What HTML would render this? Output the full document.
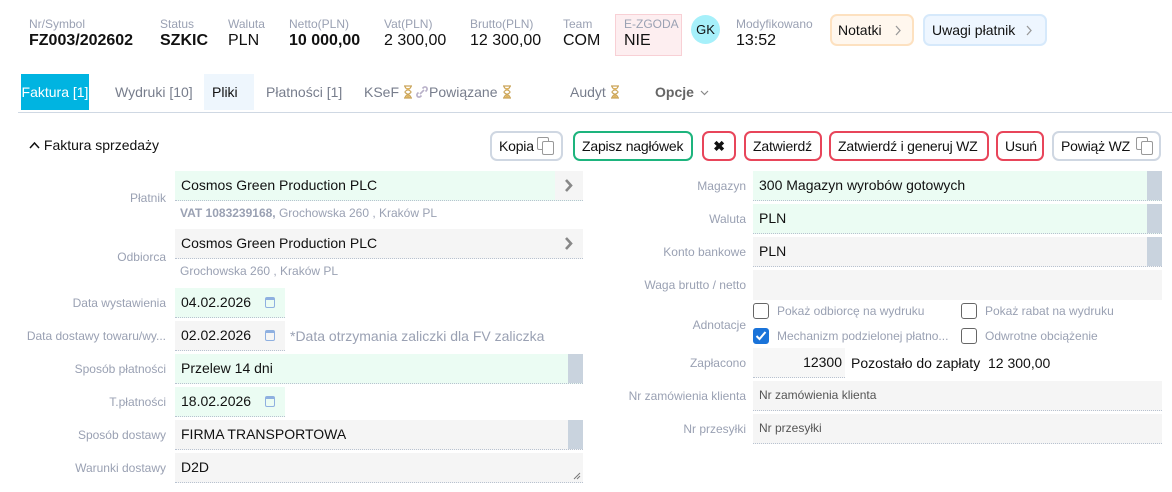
<!DOCTYPE html>
<html><head><meta charset="utf-8"><style>
*{box-sizing:border-box;margin:0;padding:0}
body{width:1172px;height:492px;overflow:hidden;background:#fff;font-family:"Liberation Sans",Arial,sans-serif;color:#111;position:relative}
.a{position:absolute;white-space:nowrap}
.hl{font-size:12px;color:#9aa1b3}
.hv{font-size:16px;color:#111}
.tab{position:absolute;top:74px;height:36px;line-height:36px;font-size:14px;color:#777d8c;padding:0 8px;white-space:nowrap}
.btn{position:absolute;top:131px;height:30px;border:2px solid #e8455a;border-radius:7px;font-size:14px;line-height:26px;padding:0 7px;background:#fff;color:#111;white-space:nowrap;letter-spacing:-0.2px}
.lbl{position:absolute;font-size:12px;color:#9aa1b3;text-align:right;white-space:nowrap}
.f{position:absolute;height:30px;background:#f5f5f5;border-bottom:1px dotted #b8c2d0;font-size:14px;line-height:29px;padding-left:6px;white-space:nowrap}
.g{background:#ebfcf3}
.bar{position:absolute;right:0;top:0;width:15px;height:29px;background:#c9d3de}
.cal{display:inline-block;width:10px;height:11px;border:1.5px solid #8fb0e0;border-top-width:3px;border-radius:2px;margin-left:14px;vertical-align:-1px}
.cb{position:absolute;width:16px;height:16px;border:1.5px solid #666;border-radius:3px;background:#fff}
.ct{position:absolute;font-size:12px;color:#9aa1b3;white-space:nowrap}
.copy{position:absolute;top:4px;width:20px;height:20px}
.copy i{position:absolute;border:1.5px solid #999;border-radius:2px;background:#fff}
.hg{display:inline-block;vertical-align:-2px;margin-left:4px}
.chev{position:absolute;right:0;top:0;width:28px;height:29px}
</style></head><body>
<!-- header -->
<div class="a hl" style="left:29px;top:17px">Nr/Symbol</div><div class="a hv" style="left:29px;top:32px;font-weight:bold">FZ003/202602</div>
<div class="a hl" style="left:160px;top:17px">Status</div><div class="a hv" style="left:160px;top:32px;font-weight:bold">SZKIC</div>
<div class="a hl" style="left:228px;top:17px">Waluta</div><div class="a hv" style="left:228px;top:32px">PLN</div>
<div class="a hl" style="left:289px;top:17px">Netto(PLN)</div><div class="a hv" style="left:289px;top:32px;font-weight:bold">10 000,00</div>
<div class="a hl" style="left:384px;top:17px">Vat(PLN)</div><div class="a hv" style="left:384px;top:32px">2 300,00</div>
<div class="a hl" style="left:470px;top:17px">Brutto(PLN)</div><div class="a hv" style="left:470px;top:32px">12 300,00</div>
<div class="a hl" style="left:563px;top:17px">Team</div><div class="a hv" style="left:563px;top:32px">COM</div>
<div class="a" style="left:615px;top:14px;width:67px;height:42px;background:#fdeef0;border:1px solid #f8d0d5"></div>
<div class="a hl" style="left:624px;top:17px">E-ZGODA</div><div class="a hv" style="left:624px;top:32px">NIE</div>
<div class="a" style="left:691px;top:15px;width:29px;height:29px;border-radius:50%;background:#a6f0fa;font-size:13px;text-align:center;line-height:29px">GK</div>
<div class="a hl" style="left:736px;top:17px">Modyfikowano</div><div class="a hv" style="left:736px;top:32px">13:52</div>
<div class="a" style="left:830px;top:14px;width:84px;height:32px;background:#fff7ee;border:2px solid #fde1c0;border-radius:7px;font-size:14px;line-height:28px;padding-left:6px">Notatki<svg style="position:absolute;left:62px;top:9px" width="8" height="11"><path d="M2 1l4 4.5-4 4.5" stroke="#999" stroke-width="1.3" fill="none"/></svg></div>
<div class="a" style="left:923px;top:14px;width:124px;height:32px;background:#eef6ff;border:2px solid #d6e9fb;border-radius:7px;font-size:14px;line-height:28px;padding-left:7px">Uwagi płatnik<svg style="position:absolute;left:100px;top:9px" width="8" height="11"><path d="M2 1l4 4.5-4 4.5" stroke="#999" stroke-width="1.3" fill="none"/></svg></div>
<!-- tabs -->
<svg width="0" height="0" style="position:absolute"><defs><g id="hg"><path d="M1 1h8M1 13h8M2 1c0 4 6 4 6 6s-6 2-6 6M8 1c0 4-6 4-6 6s6 2 6 6" stroke="#c9a45a" stroke-width="1.2" fill="none"/><path d="M3 3h4l-2 3zM2.5 12.5l2.5-3 2.5 3z" fill="#e0b560"/></g></defs></svg>
<div class="tab" style="left:21px;width:68px;padding:0;text-align:center;background:#00b4e1;color:#fff">Faktura [1]</div>
<div class="tab" style="left:107px">Wydruki [10]</div>
<div class="tab" style="left:204px;width:50px;background:#eef6fd;color:#111">Pliki</div>
<div class="tab" style="left:258px">Płatności [1]</div>
<div class="tab" style="left:356px">KSeF<svg class="hg" width="10" height="14"><use href="#hg"/></svg></div>
<div class="tab" style="left:407px"><svg width="14" height="12" style="vertical-align:-1px"><path d="M5 8l4-4M3.5 6.5l-1 1a2 2 0 003 3l1-1M7.5 2.5l1-1a2 2 0 013 3l-1 1" stroke="#b8b0c8" stroke-width="1.6" fill="none"/></svg>Powiązane<svg class="hg" width="10" height="14"><use href="#hg"/></svg></div>
<div class="tab" style="left:562px">Audyt<svg class="hg" width="10" height="14"><use href="#hg"/></svg></div>
<div class="tab" style="left:647px;font-weight:bold;color:#666">Opcje <svg width="9" height="6" style="vertical-align:1px;margin-left:2px"><path d="M1 1l3.5 3.5L8 1" stroke="#888" stroke-width="1.2" fill="none"/></svg></div>
<div class="a" style="left:18px;top:112px;width:1154px;height:1px;background:#cfd8e3"></div>
<!-- section -->
<div class="a" style="left:29px;top:137px;font-size:14px"><svg width="11" height="8" style="vertical-align:1px"><path d="M1 7l4.5-5L10 7" stroke="#111" stroke-width="1.5" fill="none"/></svg> Faktura sprzedaży</div>
<div class="btn" style="left:490px;width:73px;border-color:#cfd7e2">Kopia<span class="copy" style="left:45px"><i style="left:0;top:0;width:12px;height:13px"></i><i style="left:5px;top:4px;width:12px;height:14px"></i></span></div>
<div class="btn" style="left:573px;width:120px;border-color:#1db47d">Zapisz nagłówek</div>
<div class="btn" style="left:702px;width:34px;text-align:center;font-weight:bold;padding:0">✖</div>
<div class="btn" style="left:744px;width:78px">Zatwierdź</div>
<div class="btn" style="left:829px;width:160px">Zatwierdź i generuj WZ</div>
<div class="btn" style="left:996px;width:48px">Usuń</div>
<div class="btn" style="left:1052px;width:109px;border-color:#cfd7e2">Powiąż WZ<span class="copy" style="left:82px"><i style="left:0;top:0;width:12px;height:13px"></i><i style="left:5px;top:4px;width:12px;height:14px"></i></span></div>
<!-- left form -->
<div class="lbl" style="right:1006px;top:191px">Płatnik</div>
<div class="f g" style="left:175px;top:171px;width:408px">Cosmos Green Production PLC<div class="chev" style="background:#f5f5f5"><svg width="28" height="29"><path d="M11 9l5 5.5-5 5.5" stroke="#888" stroke-width="2.6" fill="none"/></svg></div></div>
<div class="a" style="left:180px;top:206px;font-size:12px;color:#9aa1b3"><b>VAT 1083239168,</b> Grochowska 260 , Kraków PL</div>
<div class="lbl" style="right:1006px;top:250px">Odbiorca</div>
<div class="f" style="left:175px;top:229px;width:408px">Cosmos Green Production PLC<div class="chev"><svg width="28" height="29"><path d="M11 9l5 5.5-5 5.5" stroke="#888" stroke-width="2.6" fill="none"/></svg></div></div>
<div class="a" style="left:180px;top:264px;font-size:12px;color:#9aa1b3">Grochowska 260 , Kraków PL</div>
<div class="lbl" style="right:1006px;top:296px">Data wystawienia</div>
<div class="f g" style="left:175px;top:288px;width:110px">04.02.2026<span class="cal"></span></div>
<div class="lbl" style="right:1006px;top:329px">Data dostawy towaru/wy...</div>
<div class="f" style="left:175px;top:321px;width:110px">02.02.2026<span class="cal"></span></div>
<div class="a" style="left:290px;top:328px;font-size:14px;color:#9aa1b3">*Data otrzymania zaliczki dla FV zaliczka</div>
<div class="lbl" style="right:1006px;top:362px">Sposób płatności</div>
<div class="f g" style="left:175px;top:354px;width:408px">Przelew 14 dni<div class="bar"></div></div>
<div class="lbl" style="right:1006px;top:395px">T.płatności</div>
<div class="f g" style="left:175px;top:387px;width:110px">18.02.2026<span class="cal"></span></div>
<div class="lbl" style="right:1006px;top:428px">Sposób dostawy</div>
<div class="f" style="left:175px;top:420px;width:408px">FIRMA TRANSPORTOWA<div class="bar"></div></div>
<div class="lbl" style="right:1006px;top:461px">Warunki dostawy</div>
<div class="f" style="left:175px;top:453px;width:408px">D2D<svg style="position:absolute;right:2px;bottom:2px" width="8" height="8"><path d="M1 7l6-6M4 7l3-3" stroke="#777" stroke-width="1"/></svg></div>
<!-- right form -->
<div class="lbl" style="right:426px;top:179px">Magazyn</div>
<div class="f g" style="left:753px;top:171px;width:409px">300 Magazyn wyrobów gotowych<div class="bar"></div></div>
<div class="lbl" style="right:426px;top:212px">Waluta</div>
<div class="f g" style="left:753px;top:204px;width:409px">PLN<div class="bar"></div></div>
<div class="lbl" style="right:426px;top:245px">Konto bankowe</div>
<div class="f" style="left:753px;top:237px;width:409px">PLN<div class="bar"></div></div>
<div class="lbl" style="right:426px;top:278px">Waga brutto / netto</div>
<div class="f" style="left:753px;top:270px;width:409px;border-bottom:none"></div>
<div class="lbl" style="right:426px;top:318px">Adnotacje</div>
<div class="cb" style="left:753px;top:303px"></div><div class="ct" style="left:777px;top:304px">Pokaż odbiorcę na wydruku</div>
<div class="cb" style="left:961px;top:303px"></div><div class="ct" style="left:985px;top:304px">Pokaż rabat na wydruku</div>
<div class="cb" style="left:753px;top:328px;background:#1a73d9;border-color:#1a73d9"><svg width="14" height="14" style="position:absolute;left:0;top:0"><path d="M2.5 7l3 3 6-7" stroke="#fff" stroke-width="2" fill="none"/></svg></div><div class="ct" style="left:777px;top:329px">Mechanizm podzielonej płatno...</div>
<div class="cb" style="left:961px;top:328px"></div><div class="ct" style="left:985px;top:329px">Odwrotne obciążenie</div>
<div class="lbl" style="right:426px;top:356px">Zapłacono</div>
<div class="f" style="left:753px;top:348px;width:92px;background:#f7f7f7;text-align:right;padding-right:3px">12300</div>
<div class="a" style="left:851px;top:355px;font-size:14px">Pozostało do zapłaty</div>
<div class="a" style="left:988px;top:355px;font-size:14px">12 300,00</div>
<div class="lbl" style="right:426px;top:389px">Nr zamówienia klienta</div>
<div class="f" style="left:753px;top:381px;width:409px;font-size:12px;color:#555">Nr zamówienia klienta</div>
<div class="lbl" style="right:426px;top:422px">Nr przesyłki</div>
<div class="f" style="left:753px;top:414px;width:409px;font-size:12px;color:#555">Nr przesyłki</div>
</body></html>
